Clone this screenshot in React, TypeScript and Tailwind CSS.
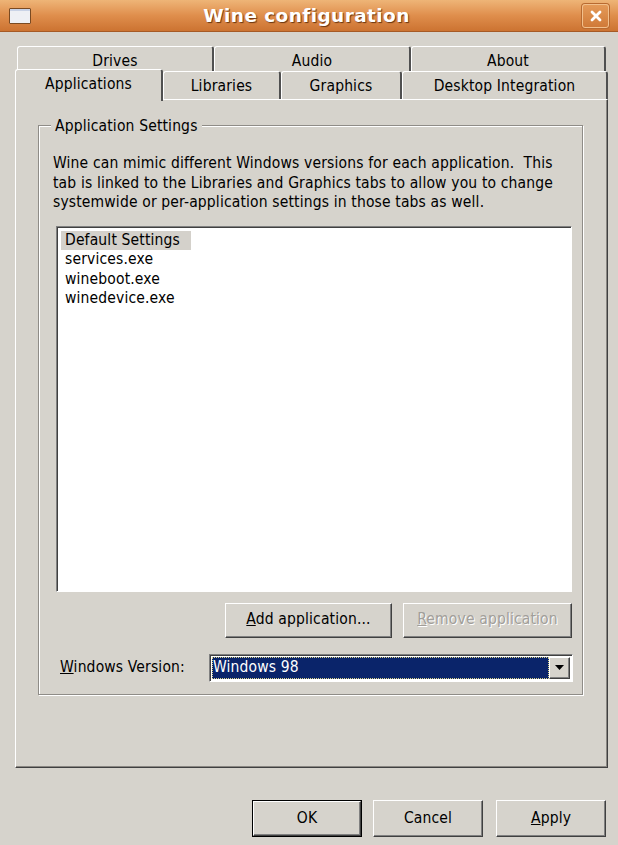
import React from 'react'

const raised =
  'border border-t-white border-l-white border-r-[#404040] border-b-[#404040] shadow-[inset_-1px_-1px_0_#808080]'
const sunken =
  'border border-t-[#808080] border-l-[#808080] border-r-white border-b-white shadow-[inset_1px_1px_0_#404040]'

function Tab({ label, width, selected }: { label: string; width: string; selected?: boolean }) {
  return (
    <div
      className={`${width} ${selected ? 'h-[32px] z-20 -mb-[2px] bg-[#d6d3cc]' : 'h-[28px] bg-[#d6d3cc]'} flex items-center justify-center rounded-t-[3px] border-t border-l border-t-white border-l-white border-r-2 border-r-[#505050] text-[15.5px] text-black`}
    >
      <span className={selected ? '-mt-[1px]' : 'mt-[2px]'}>{label}</span>
    </div>
  )
}

function Button({
  children,
  width,
  height,
  disabled,
  isDefault,
}: {
  children: React.ReactNode
  width: string
  height: string
  disabled?: boolean
  isDefault?: boolean
}) {
  return (
    <div className={`${width} ${height} ${isDefault ? 'border border-black' : ''}`}>
      <div
        className={`w-full h-full ${raised} flex items-center justify-center text-[15.5px] ${
          disabled ? 'text-[#a19e99] [text-shadow:1px_1px_0_#ffffff]' : 'text-black'
        }`}
      >
        {children}
      </div>
    </div>
  )
}

export default function App() {
  return (
    <div className="w-[618px] h-[845px] bg-[#d6d3cc] flex flex-col font-['DejaVu_Sans_Condensed','Liberation_Sans',sans-serif] tracking-[0.15px] text-black overflow-hidden">
      {/* Title bar */}
      <div className="h-[32px] shrink-0 flex items-center px-[9px] bg-gradient-to-b from-[#eeb577] via-[#df8e4c] to-[#cc7331] border-b border-[#a65a25]">
        <div className="w-[22px] h-[16px] bg-[#eef0f4] border border-[#7a4a22] rounded-[1px] shadow-[inset_0_2px_0_#c9d3e6]" />
        <div className="flex-1 text-center font-['DejaVu_Sans',sans-serif] font-bold text-[18.5px] text-white [text-shadow:1px_1px_1px_#6a3510] tracking-[0.4px]">
          Wine configuration
        </div>
        <div className="w-[27px] h-[24px] rounded-[3px] border border-[#f2c08c] shadow-[0_0_0_1px_#b86a30] bg-gradient-to-b from-[#e49a58] to-[#d07a38] flex items-center justify-center">
          <svg width="12" height="12" viewBox="0 0 12 12">
            <path d="M2 2 L10 10 M10 2 L2 10" stroke="white" strokeWidth="2.8" strokeLinecap="round" />
          </svg>
        </div>
      </div>

      <div className="pl-[15px] pr-[10px] pt-[14px] flex flex-col">
        {/* back tab row */}
        <div className="flex pl-[2px] h-[26px] items-start">
          <Tab label="Drives" width="w-[197px]" />
          <Tab label="Audio" width="w-[197px]" />
          <Tab label="About" width="w-[195px]" />
        </div>
        {/* front tab row */}
        <div className="flex h-[28px] items-end -mt-[1px] relative z-10">
          <Tab label="Applications" width="w-[148px]" selected />
          <Tab label="Libraries" width="w-[118px]" />
          <Tab label="Graphics" width="w-[121px]" />
          <Tab label="Desktop Integration" width="w-[206px]" />
        </div>

        {/* tab panel */}
        <div className="h-[669px] border border-t-white border-l-white border-r-[#404040] border-b-[#404040] shadow-[inset_-1px_-1px_0_#8a8782] pt-[25px] pl-[22px]">
          <div className="relative w-[545px] h-[570px] border border-[#8f8c87] shadow-[1px_1px_0_#ffffff,inset_1px_1px_0_#ffffff]">
            <span className="absolute -top-[10px] left-[12px] px-[4px] bg-[#d6d3cc] text-[15.5px] leading-[20px]">
              Application Settings
            </span>

            <div className="pt-[28px] pl-[14px] text-[15.5px] leading-[19.5px]">
              Wine can mimic different Windows versions for each application.&nbsp; This
              <br />
              tab is linked to the Libraries and Graphics tabs to allow you to change
              <br />
              systemwide or per-application settings in those tabs as well.
            </div>

            {/* list box */}
            <div className={`ml-[17px] mt-[13px] w-[516px] h-[366px] bg-white ${sunken} pt-[4px] pl-[4px] text-[15.5px] leading-[19.5px]`}>
              <div className="w-[130px] bg-[#d4d1cb] pl-[4px]">Default Settings</div>
              <div className="pl-[4px]">services.exe</div>
              <div className="pl-[4px]">wineboot.exe</div>
              <div className="pl-[4px]">winedevice.exe</div>
            </div>

            {/* add / remove */}
            <div className="flex justify-end gap-[11px] w-[533px] mt-[11px]">
              <Button width="w-[167px]" height="h-[35px]">
                <span>
                  <u>A</u>dd application...
                </span>
              </Button>
              <Button width="w-[169px]" height="h-[35px]" disabled>
                <span>
                  <u>R</u>emove application
                </span>
              </Button>
            </div>

            {/* windows version */}
            <div className="flex items-center mt-[16px] ml-[21px]">
              <div className="w-[149px] text-[15.5px]">
                <u>W</u>indows Version:
              </div>
              <div className={`w-[364px] h-[28px] bg-white ${sunken} flex items-center p-[2px]`}>
                <div className="flex-1 h-full bg-[#0a246a] outline-1 outline-dotted outline-[#d8d28a] -outline-offset-1 text-white text-[15.5px] flex items-center pl-[1px]">
                  Windows 98
                </div>
                <div className={`w-[21px] h-full ${raised} bg-[#d6d3cc] flex items-center justify-center`}>
                  <svg width="9" height="5" viewBox="0 0 9 5">
                    <path d="M0 0 H9 L4.5 5 Z" fill="black" />
                  </svg>
                </div>
              </div>
            </div>
          </div>
        </div>

        {/* bottom buttons */}
        <div className="flex justify-end mt-[32px] pr-[2px]">
          <Button width="w-[110px]" height="h-[37px]" isDefault>
            OK
          </Button>
          <div className="w-[11px]" />
          <Button width="w-[110px]" height="h-[37px]">
            Cancel
          </Button>
          <div className="w-[13px]" />
          <Button width="w-[110px]" height="h-[37px]">
            <span>
              <u>A</u>pply
            </span>
          </Button>
        </div>
      </div>
    </div>
  )
}
